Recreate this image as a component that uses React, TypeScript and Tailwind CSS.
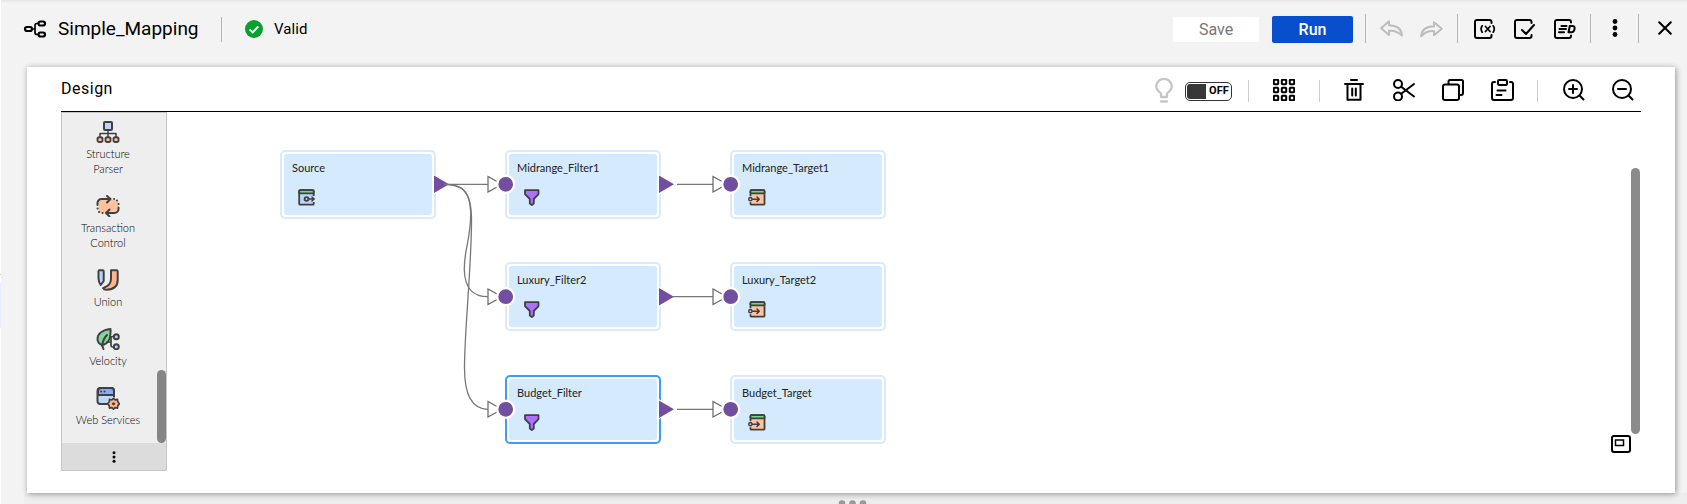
import React from 'react';

type SvgProps = { w: number; h: number; className?: string; sw?: number; children: React.ReactNode };

function Icon({ w, h, className = '', sw = 2, children }: SvgProps) {
  return (
    <svg
      width={w}
      height={h}
      viewBox={`0 0 ${w} ${h}`}
      fill="none"
      stroke="currentColor"
      strokeWidth={sw}
      strokeLinecap="round"
      strokeLinejoin="round"
      className={`block shrink-0 ${className}`}
    >
      {children}
    </svg>
  );
}

function Header() {
  return (
    <header className="flex h-[67px] shrink-0 items-start text-black shadow-[inset_0_3px_3px_-2px_rgba(0,0,0,0.08)]">
      <Icon w={24} h={20} sw={2.2} className="mt-[19px] ml-[22px]">
        <rect x="2" y="8" width="7" height="4" rx="2" />
        <rect x="15.5" y="2.5" width="6.5" height="4" rx="2" />
        <rect x="15.5" y="13.5" width="6.5" height="4" rx="2" />
        <path d="M9 10h3M15 4.5h-1a2 2 0 0 0-2 2v7a2 2 0 0 0 2 2h1" strokeWidth="1.7" />
      </Icon>
      <h1 className="mt-[15px] ml-[11px] w-[163px] text-[19px] leading-[28px] whitespace-nowrap">Simple_Mapping</h1>
      <div className="mt-[17px] h-[25px] w-px bg-[#b5b5b5]" />
      <svg width="18" height="18" viewBox="0 0 18 18" className="mt-5 ml-[23px] block">
        <circle cx="9" cy="9" r="9" fill="#08a12f" />
        <path d="M4.7 9.4l3 3 5.6-6" fill="none" stroke="#fff" strokeWidth="2" />
      </svg>
      <span className="mt-[19px] ml-[11px] text-[15px] leading-5 tracking-[0.1px]">Valid</span>
      <div className="ml-auto flex items-start">
        <button className="mt-[17px] h-[25px] w-[86px] bg-white text-[16px] leading-[25px] text-[#777]">Save</button>
        <button className="mt-4 ml-[13px] h-[27px] w-[81px] rounded-[2px] bg-[#084fce] text-[16px] leading-[27px] font-medium text-white">Run</button>
        <div className="mt-[14px] ml-3 h-[29px] w-px bg-[#b5b5b5]" />
        <Icon w={24} h={18} className="mt-5 ml-[14px] text-[#bdbdbd]">
          <path d="M9 1.2L1.2 8.2 9 15v-4.2c5-.6 9 1 13 4.700C21.500 9 17 5.500 9 5.200z" />
        </Icon>
        <Icon w={24} h={18} className="mt-[21px] ml-4 text-[#bdbdbd]">
          <path d="M14 1.200l7.800 6.500-7.800 6.500v-4c-5-.600-9 1-12.800 5C1.500 9 6 5.500 14 5.200z" />
        </Icon>
        <div className="mt-[14px] ml-[13px] h-[29px] w-px bg-[#b5b5b5]" />
        <Icon w={22} h={20} className="mt-[19px] ml-4">
          <path d="M17.500 4V3a2 2 0 0 0-2-2H3a2 2 0 0 0-2 2v14a2 2 0 0 0 2 2h12.500a2 2 0 0 0 2-2v-1" />
          <path d="M8.200 6.800q-2.200 3.200 0 6.400M19.200 6.800q2.200 3.200 0 6.400M11.500 7.500l4.500 5M16 7.500l-4.500 5" strokeWidth="1.700" />
        </Icon>
        <Icon w={22} h={20} className="mt-[19px] ml-[18px]">
          <path d="M17.500 4V3a2 2 0 0 0-2-2H3a2 2 0 0 0-2 2v14a2 2 0 0 0 2 2h12.500a2 2 0 0 0 2-2v-1M8 11l4 4 8-9" />
        </Icon>
        <Icon w={22} h={20} className="mt-[19px] ml-[18px]">
          <path d="M17 3.500V3a2 2 0 0 0-2-2H3a2 2 0 0 0-2 2v14a2 2 0 0 0 2 2h12a2 2 0 0 0 2-2v-.500" />
          <path d="M7.500 7h5M5.500 10h6.500M5 13.200h5M15.800 7h3q2.400.300 1.700 3.200-.700 3-3 3h-3z" />
        </Icon>
        <div className="mt-[14px] ml-[14px] h-[29px] w-px bg-[#b5b5b5]" />
        <svg width="6" height="20" viewBox="0 0 6 20" className="mt-[18px] ml-[21px] block">
          <circle cx="3" cy="3.500" r="2.400" />
          <circle cx="3" cy="10" r="2.400" />
          <circle cx="3" cy="16.500" r="2.400" />
        </svg>
        <div className="mt-[14px] ml-[20px] h-[29px] w-px bg-[#b5b5b5]" />
        <Icon w={14} h={14} className="mt-[21px] mr-[15px] ml-[19px]">
          <path d="M1.200 1.200l11.600 11.600M12.800 1.200L1.200 12.800" />
        </Icon>
      </div>
    </header>
  );
}

function DesignBar() {
  return (
    <div className="flex h-[45px] items-start border-b border-black">
      <h2 className="mt-[10px] text-[16px] leading-[24px] tracking-[0.5px]">Design</h2>
      <div className="ml-auto flex items-start">
        <Icon w={18} h={26} sw={2.3} className="mt-[11px] text-[#c6c6c6]">
          <path d="M6 19v-3.500C2.500 12.500 1.200 11 1.200 8.200a7.500 7 0 0 1 15.600 0c0 2.800-1.300 4.300-4.800 7.300V19zM6 23.500h6" />
        </Icon>
        <div className="mt-[15px] ml-3 flex h-[19px] w-[47px] overflow-hidden rounded-[5px] border border-[#333] bg-white p-px">
          <div className="w-[19px] rounded-l-[3px] bg-[#383838]" />
          <span className="ml-[3px] text-[11px] leading-[14px] font-bold tracking-[0.1px]">OFF</span>
        </div>
        <div className="mt-[13px] ml-4 h-[22px] w-px bg-[#ccc]" />
        <Icon w={22} h={22} className="mt-3 ml-6">
          {[3, 11, 19].map((y) =>
            [3, 11, 19].map((x) => <rect key={`${x}-${y}`} x={x - 2.2} y={y - 2.2} width="4.4" height="4.4" rx="0.8" />),
          )}
        </Icon>
        <div className="mt-[13px] ml-6 h-[22px] w-px bg-[#ccc]" />
        <Icon w={20} h={22} className="mt-3 ml-6">
          <path d="M7 1h6M1 5h18M3.500 5v15.800h13V5M8.200 9.500v7M11.800 9.500v7" />
        </Icon>
        <Icon w={22} h={22} className="mt-3 ml-[29px]">
          <circle cx="5" cy="5" r="4" />
          <circle cx="5" cy="17.500" r="4" />
          <path d="M8.200 7.700L21 17.500M8.200 14.800L21 5" />
        </Icon>
        <Icon w={22} h={22} className="mt-3 ml-[27px]">
          <rect x="1" y="5.500" width="16" height="15.500" rx="2" />
          <path d="M6.500 4.500V2.500A1.500 1.500 0 0 1 8 1h11.500A1.500 1.500 0 0 1 21 2.500V14a2 2 0 0 1-2 2h-1" />
        </Icon>
        <Icon w={23} h={22} className="mt-3 ml-[27px]">
          <path d="M4 3H3a2 2 0 0 0-2 2v14a2 2 0 0 0 2 2h17a2 2 0 0 0 2-2V5a2 2 0 0 0-2-2h-1M6.500 11.500h8M5.500 16h5" />
          <rect x="7" y="1" width="9" height="5" rx="1.300" />
        </Icon>
        <div className="mt-[13px] ml-[23px] h-[22px] w-px bg-[#ccc]" />
        <Icon w={22} h={22} className="mt-3 ml-[25px]">
          <circle cx="10" cy="10" r="9" />
          <path d="M16.500 16.500L20.500 20.500M6 10h8M10 6v8" />
        </Icon>
        <Icon w={22} h={22} className="mt-3 mr-[7px] ml-[27px]">
          <circle cx="10" cy="10" r="9" />
          <path d="M16.500 16.500L20.500 20.500M6 10h8" />
        </Icon>
      </div>
    </div>
  );
}

const dark = 'text-[#404040]';

function StructureIcon() {
  return (
    <Icon w={24} h={22} className={dark}>
      <path d="M12 10v6M4 16v-3.500h16V16" strokeWidth="1.500" />
      <rect x="8" y="1" width="8" height="8" rx="1" fill="#bcd3fb" />
      {[4, 12, 20].map((x) => (
        <rect key={x} x={x - 2.5} y="16.200" width="5" height="4.800" rx="1.800" fill="#ffc29c" strokeWidth="1.900" />
      ))}
    </Icon>
  );
}

function TransactionIcon() {
  return (
    <Icon w={24} h={22} className={dark}>
      <rect x="2.500" y="5" width="19.500" height="13" rx="3" fill="#ffc29c" stroke="none" />
      <path d="M1.500 10V8a4 4 0 0 1 4-4H14M11 1l3.500 3-3.500 3.500M22.500 12.500V14a4 4 0 0 1-4 4H11M13.500 14.500L10 18l3.500 3.500" />
      <path d="M18 4h.1M21 5.500h.1M22.500 9h.1M1.500 13.500h.1M3 17h.1M6.500 18h.1" />
    </Icon>
  );
}

function UnionIcon() {
  return (
    <Icon w={24} h={22} className={dark}>
      <path d="M3.500 1.200h3.200q1 0 1 1V12L4.800 16C3 14 2.500 12 2.500 9V2.200q0-1 1-1z" fill="#bcd3fb" />
      <path d="M16 1.200h4.500q1.200 0 1.200 1.200V11c0 6-4 9.500-11 9.800-2 0-3.200-.8-3.700-1.800 5-1.500 8-4.500 8-9V2.200q0-1 0-1z" fill="#ffb48b" />
      <path d="M4.500 19.500L11 12.500" stroke="#eee" strokeWidth="1.500" />
    </Icon>
  );
}

function VelocityIcon() {
  return (
    <Icon w={24} h={22} className={dark}>
      <path d="M14.500 1C6 2 1.500 6 1.500 11c0 3 1.500 5 4.500 6 6-1 9-5 8.500-16z" fill="#82d49a" />
      <path d="M6 18q1-7 5-11M6 17l1.500 4" />
      <path d="M17.500 8.500h-1q-1.500 0-1.500 1.500v7.500q0 1.500 1.500 1.500h1.500M11 14h4" strokeWidth="1.700" />
      <circle cx="20.300" cy="8.800" r="2.500" fill="#bcd3fb" />
      <circle cx="20.300" cy="18.700" r="2.500" fill="#bcd3fb" />
    </Icon>
  );
}

function WebServicesIcon() {
  return (
    <Icon w={24} h={23} className={dark}>
      <rect x="1.500" y="1" width="16.500" height="16" rx="3" fill="#bfd7fa" />
      <path d="M2 8V4a3 3 0 0 1 3-3h10a3 3 0 0 1 3 3v4z" fill="#82adfa" />
      <path d="M5 4.500h.1M8.500 4.500h.1" />
      <circle cx="17.500" cy="16.800" r="6.500" fill="#eee" stroke="none" />
      <path
        d="M17.500 11.300l1.600 1.500 2.400-.4.300 2.400 1.600 2-1.600 1.900-.3 2.400-2.400-.4-1.600 1.500-1.600-1.500-2.400.4-.3-2.400-1.600-1.900 1.600-2 .3-2.400 2.400.4z"
        fill="#ffb48b"
        strokeWidth="1.700"
      />
      <circle cx="17.500" cy="16.800" r="1.100" fill="#404040" strokeWidth="1" />
    </Icon>
  );
}

const palette = [
  { label: ['Structure', 'Parser'], icon: <StructureIcon />, box: 'h-[74px]' },
  { label: ['Transaction', 'Control'], icon: <TransactionIcon />, box: 'h-[74px]' },
  { label: ['Union'], icon: <UnionIcon />, box: 'h-[59px]' },
  { label: ['Velocity'], icon: <VelocityIcon />, box: 'h-[59px]' },
  { label: ['Web Services'], icon: <WebServicesIcon />, box: 'h-[56px]' },
];

function Palette() {
  return (
    <aside className="flex h-[359px] w-[106px] shrink-0 flex-col border border-[#c6c6c6] bg-[#eee]">
      <div className="relative h-[330px] overflow-hidden pt-2">
        {palette.map((p) => (
          <div key={p.label[0]} className={`flex w-[92px] flex-col items-center ${p.box}`}>
            <div className="h-[25px]">{p.icon}</div>
            {p.label.map((l) => (
              <span key={l} className="font-[Lato,sans-serif] text-[11px] leading-[15px] font-light whitespace-nowrap text-black">
                {l}
              </span>
            ))}
          </div>
        ))}
        <div className="absolute top-[257px] right-0 h-[73px] w-[9px] rounded-full bg-[#858585]" />
      </div>
      <div className="flex flex-1 items-center justify-center bg-[#dcdcdc]">
        <svg width="4" height="12" viewBox="0 0 4 12">
          <circle cx="2" cy="1.700" r="1.500" />
          <circle cx="2" cy="6" r="1.500" />
          <circle cx="2" cy="10.300" r="1.500" />
        </svg>
      </div>
    </aside>
  );
}

type Kind = 'source' | 'filter' | 'target';

function KindIcon({ kind }: { kind: Kind }) {
  if (kind === 'filter')
    return (
      <Icon w={18} h={17} sw={1.8} className={dark}>
        <path d="M2 1.200h13.500v4L10.800 10v4.500L8.800 16l-2-1.500V10L2 5.200z" fill="#ae70ff" />
      </Icon>
    );
  if (kind === 'source')
    return (
      <Icon w={18} h={17} sw={1.8} className={dark}>
        <rect x="1.200" y="1.200" width="14.500" height="14.500" rx="1" fill="#bcd3fb" />
        <rect x="1.200" y="1.200" width="14.500" height="3.200" rx="1" fill="#78d687" />
        <path d="M14 10h4" stroke="#d5eafc" strokeWidth="6" strokeLinecap="butt" />
        <circle cx="8.500" cy="10" r="1.900" />
        <path d="M10.500 10H16M14 8l2.200 2-2.200 2" strokeWidth="1.500" />
      </Icon>
    );
  return (
    <Icon w={18} h={17} sw={1.8} className={dark}>
      <rect x="2.500" y="1.200" width="14" height="14.500" rx="1" fill="#ffc29c" />
      <rect x="2.500" y="1.200" width="14" height="3.200" rx="1" fill="#78d687" />
      <path d="M0 10.200h4.500" stroke="#d5eafc" strokeWidth="6" strokeLinecap="butt" />
      <circle cx="2.400" cy="10.200" r="1.600" fill="#ffc29c" strokeWidth="1.500" />
      <path d="M4.500 10.200H11M9 8l2.300 2.200L9 12.400" strokeWidth="1.500" />
    </Icon>
  );
}

type NodeDef = { name: string; kind: Kind; pos: string; selected?: boolean };

const nodes: NodeDef[] = [
  { name: 'Source', kind: 'source', pos: 'left-[113px] top-[38px]' },
  { name: 'Midrange_Filter1', kind: 'filter', pos: 'left-[338px] top-[38px]' },
  { name: 'Midrange_Target1', kind: 'target', pos: 'left-[563px] top-[38px]' },
  { name: 'Luxury_Filter2', kind: 'filter', pos: 'left-[338px] top-[150px]' },
  { name: 'Luxury_Target2', kind: 'target', pos: 'left-[563px] top-[150px]' },
  { name: 'Budget_Filter', kind: 'filter', pos: 'left-[338px] top-[262.5px]', selected: true },
  { name: 'Budget_Target', kind: 'target', pos: 'left-[563px] top-[262.5px]' },
];

function MappingNode({ name, kind, pos, selected }: NodeDef) {
  return (
    <div
      className={`absolute h-[69px] w-[156px] rounded-[5px] border-2 bg-white p-[2px] ${pos} ${
        selected ? 'border-[#3b9bff]' : 'border-[#d6ebfd]'
      }`}
    >
      <div className="h-full rounded-[3px] bg-[#d5eafc] pt-[6px] pl-2">
        <div className="font-[Lato,sans-serif] text-[11px] leading-4 whitespace-nowrap text-[#222]">{name}</div>
        <div className="mt-[13px] ml-[6px]">
          <KindIcon kind={kind} />
        </div>
      </div>
    </div>
  );
}

const rows = [72.3, 184.7, 297.3];

function Connections() {
  return (
    <svg width="1474" height="359" viewBox="0 0 1474 359" fill="none" className="absolute top-0 left-0">
      {rows.map((y, i) => (
        <g key={y}>
          {(i === 0 ? [267, 492] : [492]).map((x) => (
            <path key={x} d={`M${x} ${y - 10}l18 10-18 10z`} fill="#fff" />
          ))}
          {(i === 0 ? [267, 492] : [492]).map((x) => (
            <path key={x} d={`M${x} ${y - 8.7}l15 8.700-15 8.700z`} fill="#714e9f" />
          ))}
          <path d={`M${i === 1 ? 506 : 510} ${y}H546`} stroke="#777" strokeWidth="1.300" />
          {[321, 546].map((x) => (
            <path key={x} d={`M${x} ${y - 7.8}l14 7.800-14 7.800z`} fill="#fff" stroke="#666" strokeWidth="1.200" />
          ))}
          {[338.7, 563.7].map((x) => (
            <circle key={x} cx={x} cy={y} r="8.500" fill="#714e9f" stroke="#fff" strokeWidth="2.300" />
          ))}
        </g>
      ))}
      <g stroke="#777" strokeWidth="1.300">
        <path d="M277 72.300H321" />
        <path d="M277 72.300C291 72.300 303 75 303.700 100C304 128 297 136 297.300 158C298 179 308 184.700 321 184.700" />
        <path d="M277 72.300C296 72.300 304 80 304.500 105C305 150 297.400 218 297.500 256C297.500 288 308 297.300 321 297.300" />
      </g>
    </svg>
  );
}

function Canvas() {
  return (
    <section className="relative flex-1">
      {nodes.map((n) => (
        <MappingNode key={n.name} {...n} />
      ))}
      <Connections />
      <div className="absolute top-[56px] right-px h-[266px] w-[9px] rounded-full bg-[#8b8b8b]" />
      <Icon w={20} h={18} className="absolute top-[323px] right-[10px]">
        <rect x="1" y="1" width="18" height="16" rx="2" />
        <rect x="4.500" y="5" width="8" height="5.500" rx="0" strokeWidth="1.500" strokeLinejoin="miter" />
      </Icon>
    </section>
  );
}

export default function App() {
  return (
    <div className="flex h-[504px] w-[1687px] overflow-hidden bg-[#f3f3f3] font-[Roboto,sans-serif] text-black">
      <div className="flex w-px shrink-0 flex-col bg-white pt-[274px]">
        <div className="h-px bg-[#d0d0d0]" />
        <div className="mt-2 h-[45px] bg-[#e8eeff]" />
      </div>
      <div className="flex min-w-0 flex-1 flex-col">
        <Header />
        <main className="relative mr-3 ml-[26px] h-[426px] shrink-0 bg-white px-[34px] shadow-[1px_1px_6px_rgba(0,0,0,0.4)]">
          <DesignBar />
          <div className="flex">
            <Palette />
            <Canvas />
          </div>
        </main>
        <footer className="ml-[23px] flex flex-1 justify-center bg-[#eee] pt-[7px] pr-[6px]">
          <svg width="30" height="8" viewBox="0 0 30 8" className="block shrink-0" fill="#999">
            <circle cx="4" cy="3.500" r="3.300" />
            <circle cx="14.500" cy="3.500" r="3.300" />
            <circle cx="25" cy="3.500" r="3.300" />
          </svg>
        </footer>
      </div>
    </div>
  );
}
